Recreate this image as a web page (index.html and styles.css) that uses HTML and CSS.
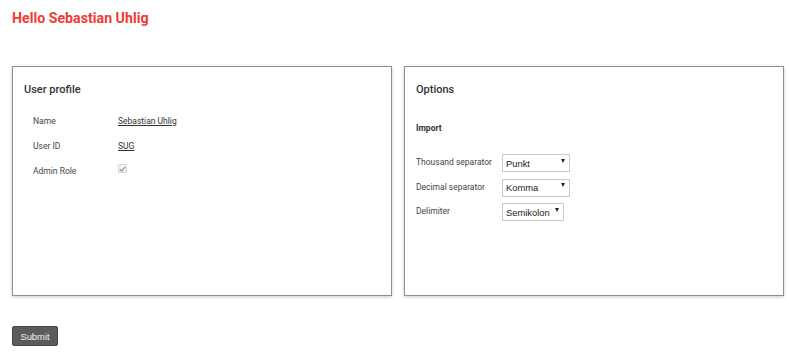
FILE: index.html
```html
<!DOCTYPE html>
<html lang="de">
<head>
<meta charset="utf-8">
<title>Hello Sebastian Uhlig</title>
<link rel="stylesheet" href="styles.css">
</head>
<body>
<div class="page">
  <h1 class="title">Hello Sebastian Uhlig</h1>
  <div class="cards">
    <section class="card">
      <h2 class="card-title">User profile</h2>
      <div class="profile">
        <div class="row"><span class="label">Name</span><a class="value" href="#">Sebastian Uhlig</a></div>
        <div class="row"><span class="label">User ID</span><a class="value" href="#">SUG</a></div>
        <div class="row"><span class="label">Admin Role</span>
          <span class="check"><svg width="7" height="6" viewBox="0 0 7 6"><path d="M0.8 3.2 L2.7 5 L6.2 0.8" fill="none" stroke="#9a9a9a" stroke-width="1.2"/></svg></span>
        </div>
      </div>
    </section>
    <section class="card">
      <h2 class="card-title">Options</h2>
      <h3 class="sub-title">Import</h3>
      <div class="options">
        <div class="opt-row"><span class="opt-label">Thousand separator</span>
          <span class="select wide"><select><option>Punkt</option><option>Komma</option></select></span></div>
        <div class="opt-row"><span class="opt-label">Decimal separator</span>
          <span class="select wide"><select><option>Komma</option><option>Punkt</option></select></span></div>
        <div class="opt-row"><span class="opt-label">Delimiter</span>
          <span class="select"><select><option>Semikolon</option><option>Komma</option></select></span></div>
      </div>
    </section>
  </div>
  <button class="submit" type="button">Submit</button>
</div>
</body>
</html>
```

FILE: styles.css
```css
html, body {
  margin: 0;
  padding: 0;
  background: #ffffff;
}

.page {
  padding: 9px 5px 0 12px;
  font-family: Roboto, "Liberation Sans", sans-serif;
  color: #333333;
}

.title {
  margin: 0;
  font-size: 14.2px;
  line-height: 18px;
  font-weight: 700;
  color: #ef3b35;
}

.cards {
  margin-top: 39px;
  display: grid;
  grid-template-columns: 1fr 1fr;
  gap: 12px;
}

.card {
  height: 230px;
  box-sizing: border-box;
  border: 1px solid #8e8e8e;
  box-shadow: 0 1px 3px rgba(0, 0, 0, 0.22);
  padding: 16px 11px 0 11px;
  background: #fff;
}

.card-title {
  margin: 0;
  font-size: 11px;
  line-height: 13px;
  font-weight: 500;
  color: #333;
}

.profile {
  margin-top: 12px;
  padding-left: 9px;
}

.row {
  height: 25px;
  display: flex;
  align-items: center;
  font-size: 8.5px;
}

.label {
  width: 85px;
  color: #444;
}

.value {
  color: #333;
  text-decoration: underline;
}

.check {
  width: 7px;
  height: 7px;
  border: 1px solid #d2d2d2;
  background: #f4f4f4;
  border-radius: 1px;
  display: flex;
  align-items: center;
  justify-content: center;
  margin-top: -4px;
}

.sub-title {
  margin: 26px 0 0 0;
  font-size: 8.5px;
  line-height: 12px;
  font-weight: 700;
  color: #333;
}

.options {
  margin-top: 19px;
  display: flex;
  flex-direction: column;
  gap: 6.5px;
}

.opt-row {
  height: 18px;
  display: flex;
  align-items: center;
}

.opt-label {
  width: 86px;
  font-size: 8.5px;
  color: #444;
}

.select {
  position: relative;
  display: inline-block;
}

.select select {
  appearance: none;
  -webkit-appearance: none;
  height: 18px;
  box-sizing: border-box;
  border: 1px solid #c9c9c9;
  border-radius: 0;
  background: #fff;
  font-family: "Liberation Sans", Arial, sans-serif;
  font-size: 9.4px;
  color: #222;
  padding: 0 13px 0 3px;
  margin: 0;
  outline: none;
}

.select.wide select {
  width: 68px;
}

.select::after {
  content: "";
  position: absolute;
  right: 5px;
  top: 7px;
  border-left: 2.5px solid transparent;
  border-right: 2.5px solid transparent;
  border-top: 4px solid #222;
  pointer-events: none;
}

.submit {
  margin-top: 30px;
  width: 46px;
  height: 20px;
  box-sizing: border-box;
  background: #5b5b5b;
  border: 1px solid #454545;
  border-radius: 2px;
  color: #f4f4f4;
  font-family: "Liberation Sans", Arial, sans-serif;
  font-size: 9.4px;
  padding: 0;
}
```
